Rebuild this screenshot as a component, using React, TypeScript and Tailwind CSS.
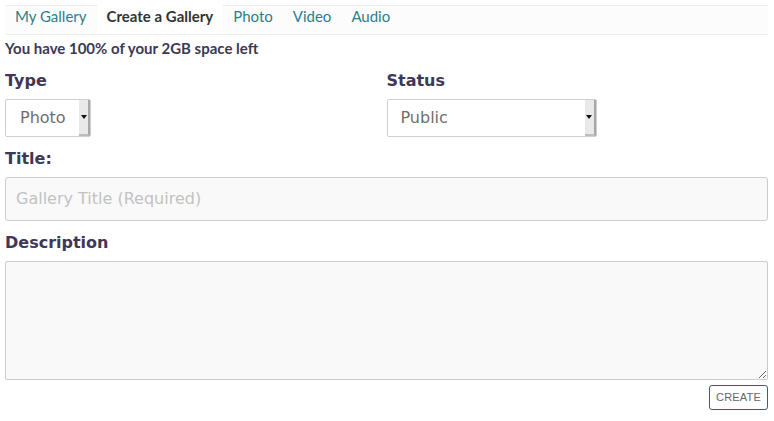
import { useState } from 'react'

type TabId = 'my' | 'create' | 'photo' | 'video' | 'audio'

const TABS: { id: TabId; label: string }[] = [
  { id: 'my', label: 'My Gallery' },
  { id: 'create', label: 'Create a Gallery' },
  { id: 'photo', label: 'Photo' },
  { id: 'video', label: 'Video' },
  { id: 'audio', label: 'Audio' },
]

const labelCls = "font-['DejaVu_Sans',sans-serif] text-[16px] font-bold text-[#3e3858] leading-none"

function FakeSelect({ value, width, textPad }: { value: string; width: string; textPad: string }) {
  return (
    <div className={`flex h-[38px] ${width} items-stretch rounded-[2px] border border-[#cfcfcf] bg-white`}>
      <span
        className={`flex flex-1 items-center ${textPad} font-['DejaVu_Sans',sans-serif] text-[16px] text-[#6e6e6e]`}
      >
        {value}
      </span>
      <span className="flex w-[11px] items-center justify-center border-r-2 border-b-2 border-r-[#a8a8a8] border-b-[#bdbdbd] bg-[#e9e9e9]">
        <svg width="6" height="4" viewBox="0 0 6 4">
          <path d="M0 0h6L3 4z" fill="#111" />
        </svg>
      </span>
    </div>
  )
}

export default function App() {
  const [active, setActive] = useState<TabId>('create')

  return (
    <div className="min-h-[421px] bg-white pt-[5px] pl-[5px] pr-[6px] font-['Lato',sans-serif]">
      {/* Tab bar */}
      <div className="flex h-[30px] items-stretch border-t border-b border-[#ececec] bg-[#fcfcfc]">
        {TABS.map((tab) => (
          <button
            key={tab.id}
            type="button"
            onClick={() => setActive(tab.id)}
            className={`-mt-px flex items-center px-[10px] pb-[7px] text-[15px] ${
              active === tab.id
                ? 'bg-white font-bold text-[#333]'
                : 'text-[#2b7f8c]'
            }`}
          >
            {tab.label}
          </button>
        ))}
      </div>

      <p className="mt-[2px] text-[15px] font-bold text-[#3d3852]">You have 100% of your 2GB space left</p>

      {/* Type / Status */}
      <div className="mt-[13px] grid grid-cols-2">
        <div className="flex flex-col gap-[10px]">
          <span className={labelCls}>Type</span>
          <FakeSelect value="Photo" width="w-[86px]" textPad="pl-[14px]" />
        </div>
        <div className="flex flex-col gap-[10px]">
          <span className={labelCls}>Status</span>
          <FakeSelect value="Public" width="w-[210px]" textPad="pl-[13px]" />
        </div>
      </div>

      <div className="mt-[14px] flex flex-col gap-[10px]">
        <span className={labelCls}>Title:</span>
        <input
          placeholder="Gallery Title (Required)"
          className="h-[44px] w-full rounded-[3px] border border-[#cccccc] bg-[#f9f9f9] px-[10px] font-['DejaVu_Sans',sans-serif] text-[16px] text-[#555] placeholder:text-[#c2c2c2] outline-none"
        />
      </div>

      <div className="mt-[14px] flex flex-col gap-[10px]">
        <span className={labelCls}>Description</span>
        <textarea className="block h-[119px] w-full rounded-[2px] border border-[#cccccc] bg-[#f9f9f9] outline-none" />
      </div>

      <div className="mt-[5px] flex justify-end">
        <button
          type="button"
          className="h-[25px] rounded-[3px] border border-[#2d6b62] px-[6px] font-['Liberation_Sans',sans-serif] text-[11px] tracking-[0.2px] text-[#666]"
        >
          CREATE
        </button>
      </div>
    </div>
  )
}
